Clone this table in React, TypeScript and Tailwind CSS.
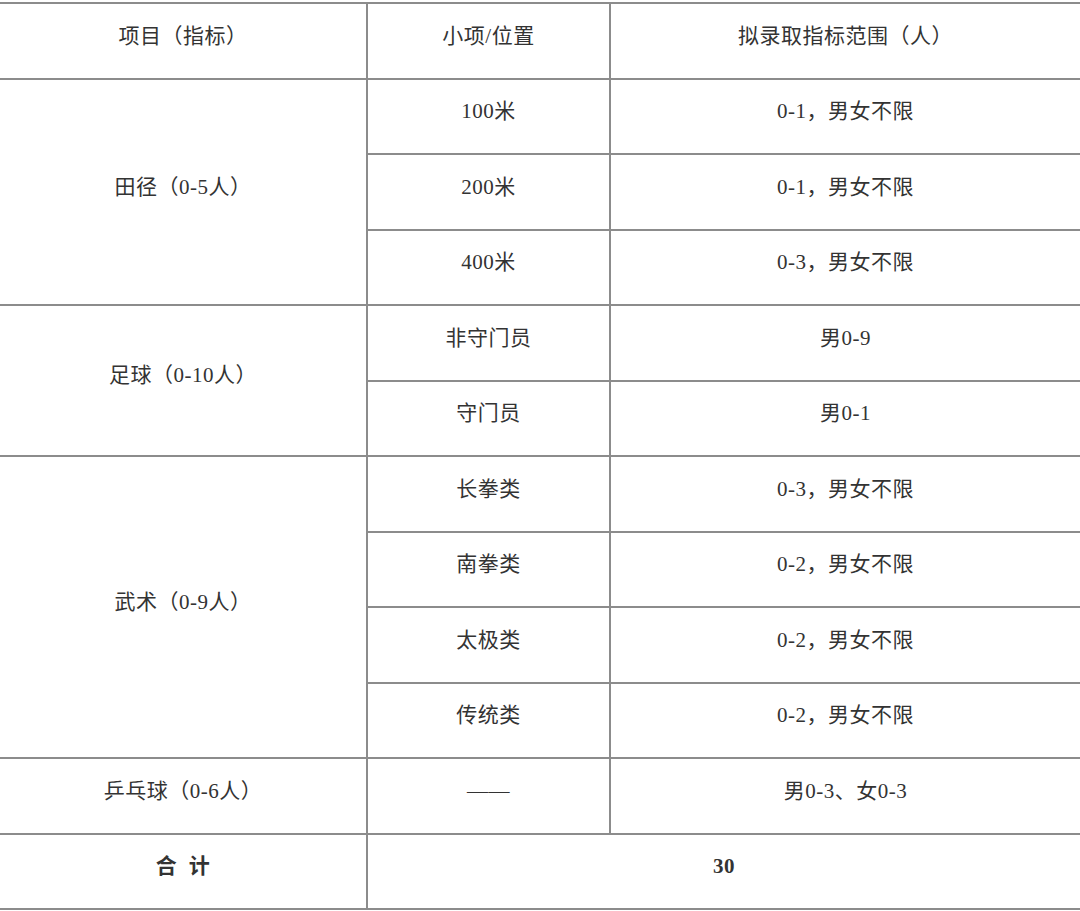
import React from "react";

const font = { fontFamily: '"Liberation Serif", "Noto Sans CJK SC", serif' };

function Cell({ children, className = "" }: { children?: React.ReactNode; className?: string }) {
  return (
    <div className={`flex items-center justify-center border-b-2 border-[#8c8c8c] pb-[9px] text-[21px] text-[#333] ${className}`}>
      {children}
    </div>
  );
}

export default function App() {
  const rows: [string, string][] = [
    ["100米", "0-1，男女不限"],
    ["200米", "0-1，男女不限"],
    ["400米", "0-3，男女不限"],
    ["非守门员", "男0-9"],
    ["守门员", "男0-1"],
    ["长拳类", "0-3，男女不限"],
    ["南拳类", "0-2，男女不限"],
    ["太极类", "0-2，男女不限"],
    ["传统类", "0-2，男女不限"],
    ["——", "男0-3、女0-3"],
  ];
  return (
    <div className="w-[1080px] h-[911px] overflow-hidden bg-white tracking-[0.5px]" style={font}>
      <div className="mt-[2px] border-t-2 border-[#8c8c8c] grid grid-cols-[368px_243px_469px] grid-rows-[repeat(12,75.5px)]">
        <Cell className="border-r-2 pb-[6px]">项目（指标）</Cell>
        <Cell className="border-r-2 pb-[6px]">小项/位置</Cell>
        <Cell className="pb-[6px]">拟录取指标范围（人）</Cell>

        <Cell className="row-start-2 row-span-3 col-start-1 border-r-2">田径（0-5人）</Cell>
        <Cell className="row-start-5 row-span-2 col-start-1 border-r-2">足球（0-10人）</Cell>
        <Cell className="row-start-7 row-span-4 col-start-1 border-r-2">武术（0-9人）</Cell>
        <Cell className="row-start-11 col-start-1 border-r-2">乒乓球（0-6人）</Cell>

        {rows.map(([a, b], i) => (
          <React.Fragment key={i}>
            <Cell className="col-start-2 border-r-2">{a}</Cell>
            <Cell className="col-start-3">{b}</Cell>
          </React.Fragment>
        ))}

        <Cell className="col-start-1 border-r-2 font-bold">合&nbsp;&nbsp;计</Cell>
        <Cell className="col-start-2 col-span-2 font-bold">30</Cell>
      </div>
    </div>
  );
}
